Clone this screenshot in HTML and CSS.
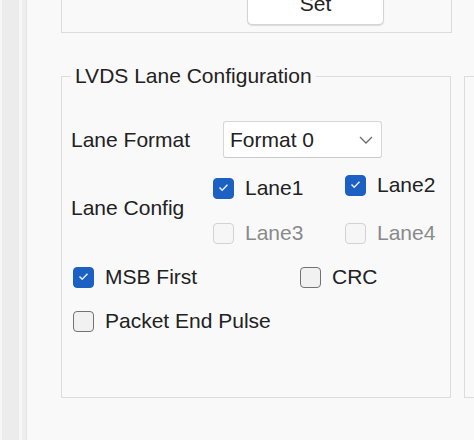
FILE: index.html
```html
<!DOCTYPE html>
<html>
<head>
<meta charset="utf-8">
<link rel="stylesheet" href="styles.css">
</head>
<body>
<div class="window">
  <div class="edge"></div>
  <div class="main">
    <div class="group-top">
      <button class="btn">Set</button>
    </div>
    <div class="row">
      <fieldset class="group">
        <legend>LVDS Lane Configuration</legend>
        <div class="line-format">
          <span class="label label-format">Lane Format</span>
          <div class="select">
            <span>Format 0</span>
            <svg class="chev" width="14" height="8" viewBox="0 0 14 8"><polyline points="1,1 7,7 13,1" fill="none" stroke="#6a6a6a" stroke-width="1.3"/></svg>
          </div>
        </div>
        <div class="line-config">
          <span class="label label-config">Lane Config</span>
          <div class="lanes">
            <label class="cb"><span class="box checked"><svg width="21" height="21" viewBox="0 0 21 21"><polyline points="6.5,10.5 9.2,13.2 14.5,7.8" fill="none" stroke="#e6eefa" stroke-width="1.5"/></svg></span>Lane1</label>
            <label class="cb up"><span class="box checked"><svg width="21" height="21" viewBox="0 0 21 21"><polyline points="6.5,10.5 9.2,13.2 14.5,7.8" fill="none" stroke="#e6eefa" stroke-width="1.5"/></svg></span>Lane2</label>
            <label class="cb disabled"><span class="box"></span>Lane3</label>
            <label class="cb disabled"><span class="box"></span>Lane4</label>
          </div>
        </div>
        <div class="line-opts">
          <label class="cb msb"><span class="box checked"><svg width="21" height="21" viewBox="0 0 21 21"><polyline points="6.5,10.5 9.2,13.2 14.5,7.8" fill="none" stroke="#e6eefa" stroke-width="1.5"/></svg></span>MSB First</label>
          <label class="cb crc"><span class="box"></span>CRC</label>
        </div>
        <div class="line-opts last">
          <label class="cb"><span class="box"></span>Packet End Pulse</label>
        </div>
      </fieldset>
      <div class="group-right"></div>
    </div>
  </div>
</div>
</body>
</html>
```

FILE: styles.css
```css
html, body {
  margin: 0;
  padding: 0;
  background: #f9f9f9;
}
body {
  font-family: "Liberation Sans", Arial, sans-serif;
  font-size: 21px;
  line-height: 24px;
  color: #222222;
  overflow: hidden;
}
.window {
  display: flex;
  width: 474px;
  height: 440px;
  border-bottom: 2px solid #ffffff;
}
.edge {
  width: 27px;
  flex: none;
  background: linear-gradient(to right,
    #f6f6f6 0, #f6f6f6 2px,
    #ececec 2px, #ececec 19px,
    #f7f7f7 19px, #f7f7f7 22px,
    #eeeeee 22px, #eeeeee 26px,
    #e2e2e2 26px, #e2e2e2 27px);
}
.main {
  flex: 1;
  background: #f9f9f9;
  padding-left: 34px;
  overflow: hidden;
}
.group-top {
  width: 389px;
  height: 32px;
  border: 1px solid #dcdcdc;
  border-top: none;
  display: flex;
}
.btn {
  margin-top: -12px;
  margin-left: 185px;
  width: 137px;
  height: 37px;
  box-sizing: border-box;
  background: #ffffff;
  border: 1px solid #d4d4d4;
  border-radius: 5px;
  box-shadow: 0 1px 1px rgba(0,0,0,0.12);
  font: inherit;
  color: #222222;
  padding: 0 0 8px 0;
  display: flex;
  align-items: flex-end;
  justify-content: center;
}
.row {
  display: flex;
  margin-top: 31px;
}
.group {
  margin: 0;
  box-sizing: border-box;
  width: 390px;
  border: 1px solid #dcdcdc;
  padding: 0 9px 63px 9px;
}
.group legend {
  padding: 0 4px;
  line-height: 24px;
}
.group-right {
  margin-left: 13px;
  margin-top: 12px;
  flex: 1;
  border: 1px solid #dcdcdc;
  border-right: none;
}
.line-format {
  display: flex;
  align-items: center;
  margin-top: 33px;
}
.label-format {
  width: 152px;
  flex: none;
}
.select {
  width: 159px;
  height: 37px;
  box-sizing: border-box;
  background: #ffffff;
  border: 1px solid #d6d6d6;
  border-bottom-color: #c8c8c8;
  border-radius: 3px;
  display: flex;
  align-items: center;
  justify-content: space-between;
  padding: 0 8px 0 6px;
}
.chev {
  display: block;
}
.line-config {
  display: flex;
  align-items: center;
  margin-top: 17px;
}
.label-config {
  width: 142px;
  flex: none;
  margin-bottom: 6px;
}
.lanes {
  display: grid;
  grid-template-columns: 132px auto;
  row-gap: 19px;
}
.cb {
  display: flex;
  align-items: center;
  gap: 11px;
  height: 26px;
}
.cb.up {
  margin-top: -3px;
  margin-bottom: 3px;
}
.box {
  width: 21px;
  height: 21px;
  box-sizing: border-box;
  border: 1.5px solid #727272;
  background: #f1f1f1;
  border-radius: 4px;
  flex: none;
  display: block;
}
.box svg {
  display: block;
  margin: -1.5px;
}
.box.checked {
  background: #1d60c3;
  border-color: #1d60c3;
}
.cb.disabled {
  color: #8a8a8a;
}
.cb.disabled .box {
  border-color: #d2d2d2;
  background: #f6f6f6;
}
.line-opts {
  display: flex;
  margin-top: 18px;
  padding-left: 2px;
}
.msb {
  width: 227px;
}
.crc .box {
  margin-top: 1px;
}
```
